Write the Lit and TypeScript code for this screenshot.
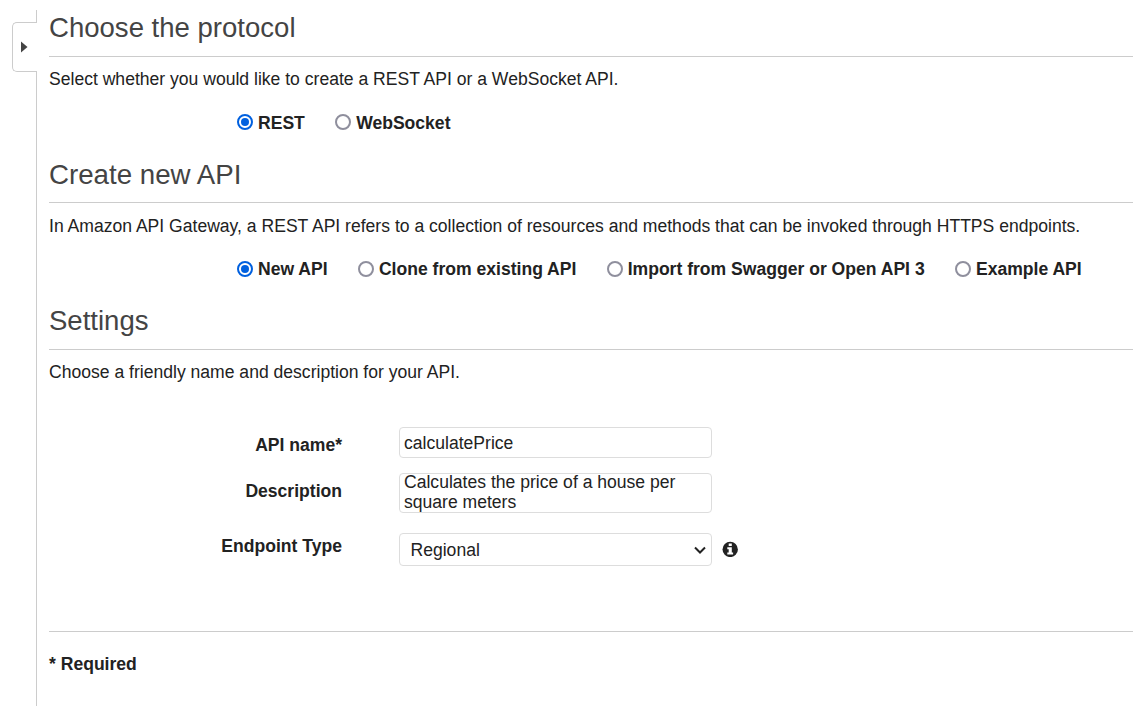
import { LitElement, html, css } from 'lit';
import { customElement } from 'lit/decorators.js';

@customElement('radio-option')
class RadioOption extends LitElement {
  static properties = { label: {}, checked: { type: Boolean } };
  declare label: string;
  declare checked: boolean;
  static styles = css`
    :host { display: flex; align-items: flex-start; white-space: nowrap; }
    .dot { flex: none; width: 16px; height: 16px; margin: var(--dot-top, 1px) 5px 0 0; display: block; }
    .text { font-weight: 700; }
  `;
  render() {
    return html`
      <svg class="dot" viewBox="0 0 16 16">
        <circle cx="8" cy="8" r="7" fill="#fff" stroke=${this.checked ? '#0060df' : '#8f8f9d'} stroke-width="2"></circle>
        ${this.checked ? html`<svg><circle cx="8" cy="8" r="4" fill="#0060df"></circle></svg>` : ''}
      </svg>
      <span class="text">${this.label}</span>`;
  }
}

@customElement('app-root')
class AppRoot extends LitElement {
  static styles = css`
    :host {
      display: flex; width: 100%; height: 706px; overflow: hidden; background: #fff;
      color: #222; font: 17.57px/20px "Liberation Sans", Arial, sans-serif;
    }
    .rail { flex: none; width: 37px; box-sizing: border-box; padding-top: 10px; display: flex; flex-direction: column; align-items: flex-end; }
    .stub { width: 1px; height: 12px; background: #ccc; }
    .handle {
      width: 25px; height: 50px; box-sizing: border-box; border: 1px solid #ccc; border-right: 0;
      border-radius: 5px 0 0 5px; display: flex; align-items: center; padding-left: 8px;
    }
    .edge { width: 1px; flex: 1; background: #ccc; }
    .main { flex: 1; min-width: 0; padding-left: 12px; }
    .section { height: 146px; box-sizing: border-box; padding-top: 10px; }
    .title { margin: 0; height: 46px; border-bottom: 1px solid #ccc; color: #444; font-size: 27.55px; font-weight: 400; line-height: 35px; }
    .create .title { line-height: 37px; font-size: 27.7px; }
    .lead { margin: 12px 0 0; white-space: nowrap; }
    .create .lead { margin-top: 13px; }
    .options { display: flex; gap: 30.3px; margin: 24px 0 0 188px; }
    .create .options { margin-top: 23px; --dot-top: 2px; }
    .create { height: 147px; }
    .settings { height: auto; }
    .form { margin-top: 45px; display: grid; grid-template-columns: 293px 313px auto; column-gap: 57px; justify-content: start; }
    .label { font-weight: 700; text-align: right; }
    .labels { display: flex; flex-direction: column; }
    .labels .label:nth-child(1) { margin-top: 8px; }
    .labels .label:nth-child(2) { margin-top: 26px; }
    .labels .label:nth-child(3) { margin-top: 35px; }
    .field { box-sizing: border-box; border: 1px solid #ddd; border-radius: 4px; padding: 0 4px; }
    .name { height: 31px; line-height: 30px; }
    .desc { height: 40px; margin-top: 15px; line-height: 20px; overflow: hidden; }
    .desc-text { display: block; margin-top: -2px; }
    .type { height: 33px; margin-top: 20px; padding: 0 5.5px 0 10.5px; display: flex; align-items: center; justify-content: space-between; }
    .info { margin: 114px 0 0 -47px; display: block; }
    .footer { margin-top: 65px; border-top: 1px solid #ccc; padding-top: 22px; font-weight: 700; }
  `;
  render() {
    return html`
      <div class="rail">
        <div class="stub"></div>
        <div class="handle"><svg width="7" height="12" viewBox="0 0 7 12"><path d="M0 .5L6.5 6L0 11.5Z" fill="#444"></path></svg></div>
        <div class="edge"></div>
      </div>
      <div class="main">
        <section class="section">
          <h2 class="title">Choose the protocol</h2>
          <p class="lead">Select whether you would like to create a REST API or a WebSocket API.</p>
          <div class="options">
            <radio-option label="REST" checked></radio-option>
            <radio-option label="WebSocket"></radio-option>
          </div>
        </section>
        <section class="section create">
          <h2 class="title">Create new API</h2>
          <p class="lead">In Amazon API Gateway, a REST API refers to a collection of resources and methods that can be invoked through HTTPS endpoints.</p>
          <div class="options">
            <radio-option label="New API" checked></radio-option>
            <radio-option label="Clone from existing API"></radio-option>
            <radio-option label="Import from Swagger or Open API 3"></radio-option>
            <radio-option label="Example API"></radio-option>
          </div>
        </section>
        <section class="section settings">
          <h2 class="title">Settings</h2>
          <p class="lead">Choose a friendly name and description for your API.</p>
          <div class="form">
            <div class="labels">
              <div class="label">API name*</div>
              <div class="label">Description</div>
              <div class="label">Endpoint Type</div>
            </div>
            <div class="fields">
              <div class="field name">calculatePrice</div>
              <div class="field desc"><span class="desc-text">Calculates the price of a house per square meters</span></div>
              <div class="field type"><span>Regional</span>
                <svg width="12" height="8" viewBox="0 0 12 8"><path d="M1 1.5L6 6.5L11 1.5" fill="none" stroke="#222" stroke-width="2"></path></svg>
              </div>
            </div>
            <svg class="info" width="16" height="16" viewBox="0 0 16 16">
              <circle cx="8.2" cy="8.4" r="7.7" fill="#222"></circle>
              <path d="M6.7 2.4H9.8V4.9H6.7ZM5.3 6.2H9.8V11.4H11.1V13.4H5.3V11.4H6.7V8.2H5.3Z" fill="#fff"></path>
            </svg>
          </div>
        </section>
        <div class="footer">* Required</div>
      </div>`;
  }
}
